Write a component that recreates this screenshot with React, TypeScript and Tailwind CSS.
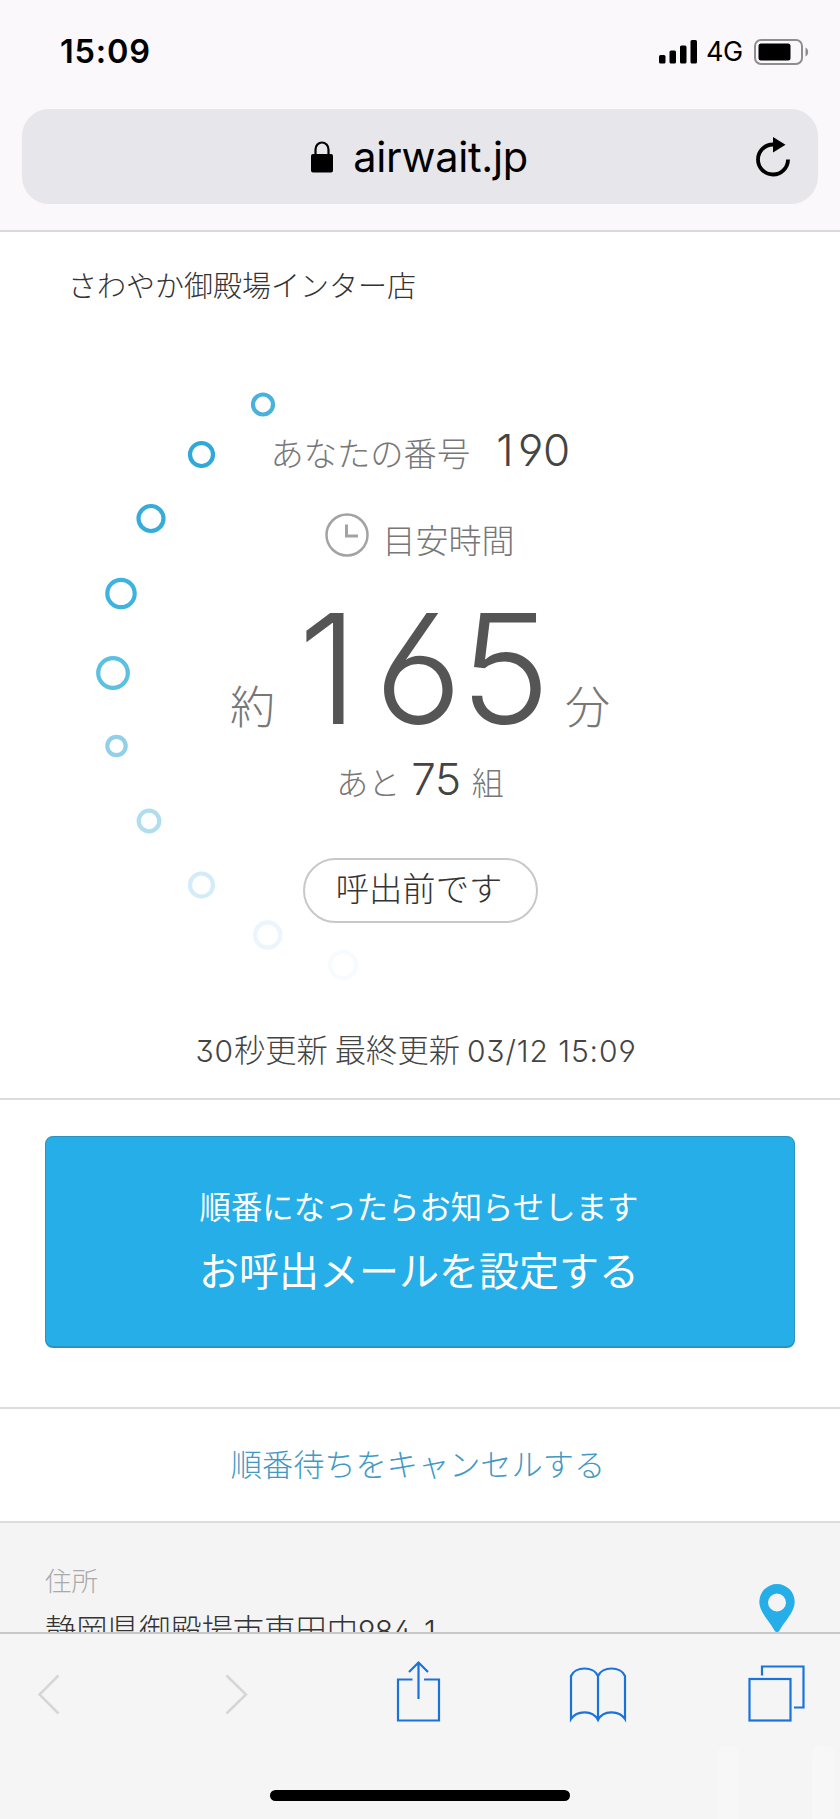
const JP = "font-['Noto_Sans_CJK_JP',sans-serif]";
const NUM =
  "font-['Inter','Noto_Sans_CJK_JP',sans-serif] font-light [font-feature-settings:'ss01','cv03','cv04']";

const RINGS = [
  { x: 263, y: 172.5, r: 10, color: "#48b2dc" },
  { x: 201.5, y: 222.5, r: 11.5, color: "#2fa8da" },
  { x: 151, y: 286.5, r: 12.5, color: "#36acdb" },
  { x: 121, y: 361.5, r: 13.7, color: "#3fb3df" },
  { x: 113, y: 441, r: 14.8, color: "#5cc0e2" },
  { x: 116.5, y: 514, r: 9.2, color: "#92d0ea" },
  { x: 149, y: 589, r: 10.3, color: "#b0def0" },
  { x: 201.5, y: 653, r: 11.5, color: "#d3ecf7" },
  { x: 267.7, y: 703, r: 12.6, color: "#eaf5fc" },
  { x: 343, y: 733, r: 13, color: "#f7fbfe" },
];

function StatusBar() {
  return (
    <div className="flex h-[109px] items-start justify-between pl-[60px] pr-[31px] pt-8">
      <span className="font-['Inter',sans-serif] text-[32.500px] font-semibold leading-10 tracking-[0.8px]">
        15:09
      </span>
      <div className="flex h-10 items-center">
        <svg width="39" height="24" viewBox="0 0 39 24">
          <rect x="0" y="15" width="6.5" height="8.5" rx="1.5" />
          <rect x="10.5" y="10.5" width="6.5" height="13" rx="1.5" />
          <rect x="21" y="5.5" width="6.5" height="18" rx="1.5" />
          <rect x="31.5" y="0" width="6.5" height="23.5" rx="1.5" />
        </svg>
        <span className="ml-2 w-[48px] font-['Inter',sans-serif] text-[27px] leading-[42px] tracking-[-0.4px]">
          4G
        </span>
        <svg width="55" height="26" viewBox="0 0 55 26">
          <rect
            x="1"
            y="1"
            width="47"
            height="24"
            rx="6"
            fill="none"
            stroke="#8e8e8e"
            strokeWidth="2"
          />
          <rect x="4.5" y="4.5" width="32" height="17" rx="2.5" />
          <path d="M51.5 8.5c3.5 1.5 3.5 7.500 0 9z" fill="#8e8e8e" />
        </svg>
      </div>
    </div>
  );
}

function AddressBar() {
  return (
    <div className="mx-[22px] grid h-[95px] grid-cols-[80px_1fr_80px] items-center rounded-[27px] bg-[#e7e6ea]">
      <span />
      <div className="flex items-center justify-center pr-0.5">
        <svg width="24" height="32" viewBox="0 0 24 32" className="mr-[19px]">
          <rect x="1" y="13" width="22" height="18.500" rx="2" />
          <path
            d="M5.500 14V8.500a6.500 7 0 0 1 13 0V14"
            fill="none"
            stroke="#000"
            strokeWidth="2.200"
          />
        </svg>
        <span className="pt-[3px] font-['Inter',sans-serif] text-[41.500px] leading-none tracking-[-0.3px]">
          airwait.jp
        </span>
      </div>
      <svg width="36" height="42" viewBox="0 0 36 42" className="ml-[17px]">
        <path
          d="M18 8.500A15 15 0 1 0 33 23.500"
          fill="none"
          stroke="#000"
          strokeWidth="3.800"
        />
        <path d="M18 1v15.500l12.500-7.700z" />
      </svg>
    </div>
  );
}

function WaitPanel() {
  return (
    <section className="relative h-[868px] border-b-2 border-[#dcdcdc]">
      {/* Progress rings around the counter */}
      <svg
        width="420"
        height="800"
        viewBox="0 0 420 800"
        fill="none"
        strokeWidth="4.200"
        className="absolute left-0 top-0"
      >
        {RINGS.map((ring) => (
          <circle key={ring.y} cx={ring.x} cy={ring.y} r={ring.r} stroke={ring.color} />
        ))}
      </svg>

      <h1
        className={`${JP} h-[170px] pl-[68px] pt-[31px] text-[29px] font-light leading-[42px] text-[#333]`}
      >
        さわやか御殿場インター店
      </h1>

      <div className="flex h-[96px] items-baseline justify-center leading-[96px]">
        <span className={`${JP} text-[33.300px] font-light text-[#777]`}>あなたの番号</span>
        <span className={`${NUM} ml-[26px] text-[44px] tracking-[-0.5px] text-[#444]`}>
          <span className="tracking-[4.500px]">1</span>90
        </span>
      </div>

      <div className="flex h-[79px] items-start justify-center pr-px pt-[15px]">
        <svg width="44" height="44" viewBox="0 0 44 44" fill="none" stroke="#a3a3a3">
          <circle cx="22" cy="22" r="20.500" strokeWidth="2.500" />
          <path d="M21.500 11.500V23H33" strokeWidth="3" />
        </svg>
        <span className={`${JP} ml-3.5 mt-0.5 text-[33px] font-light leading-[48px] text-[#777]`}>
          目安時間
        </span>
      </div>

      <div className="flex h-[184px] items-baseline justify-center leading-[184px]">
        <span className={`${JP} text-[45px] font-light text-[#777]`}>約</span>
        <span className={`${NUM} ml-[23px] mr-[17px] text-[153px] tracking-[-2.500px] text-[#555]`}>
          <span className="tracking-[16px]">1</span>65
        </span>
        <span className={`${JP} text-[45px] font-light text-[#777]`}>分</span>
      </div>

      <div className="flex h-[68px] items-baseline justify-center leading-9">
        <span className={`${JP} text-[32px] font-light text-[#777]`}>あと</span>
        <span className={`${NUM} mx-[11px] text-[44px] tracking-[-0.5px] text-[#444]`}>75</span>
        <span className={`${JP} text-[32px] font-light text-[#777]`}>組</span>
      </div>

      <div className="mt-[29px] flex justify-center">
        <span
          className={`${JP} h-[65px] w-[235px] rounded-full border-2 border-[#c8c8c8] pr-0.5 text-center text-[33.300px] font-light leading-[54px] text-[#333]`}
        >
          呼出前です
        </span>
      </div>

      <p
        className={`${JP} mt-[101px] pr-2 text-center text-[31.300px] font-light leading-[50px] text-[#444]`}
      >
        <span className={`${NUM} text-[30px] tracking-[0.9px]`}>30</span>秒更新 最終更新{" "}
        <span className={`${NUM} text-[30px] tracking-[0.9px]`}>03/12 15:09</span>
      </p>
    </section>
  );
}

function Toolbar() {
  return (
    <nav className="relative h-[187px] border-t-2 border-[#c8c8c8] bg-[#f5f5f5]">
      <svg width="840" height="100" viewBox="0 1634 840 100" fill="none" strokeWidth="2.200">
        <g stroke="#d6d6d6" strokeWidth="2.500">
          <path d="M58.500 1675.500L39.500 1694.500L58.500 1713.500" />
          <path d="M226.500 1675.500L246 1694.500L226.500 1713.500" />
        </g>
        <g stroke="#1a73dc">
          {/* Share */}
          <path d="M412.500 1679.500H398V1720.500H439V1679.500H424" />
          <path d="M418.500 1699V1663M409 1672L418.500 1662.500L428 1672" />
          {/* Bookmarks */}
          <path d="M598 1720V1676C594 1666 575 1666 571 1676V1719C577 1710 593 1710 598 1720C603 1710 619 1710 625 1719V1676C621 1666 602 1666 598 1676" />
          {/* Tabs */}
          <rect x="749.500" y="1679" width="41" height="41.500" />
          <path d="M762 1675.500V1666.500H803.500V1707.500H794" />
        </g>
      </svg>
      <div className="mx-auto mt-[56px] h-[11px] w-[300px] rounded-full bg-black" />
      {/* Page content showing faintly through the bar */}
      <div className="absolute bottom-0 right-[101px] h-[73px] w-[22px] rounded-t-lg bg-[#f7f7f7]" />
      <div className="absolute bottom-0 right-[5px] h-[73px] w-[23px] rounded-t-lg bg-[#f7f7f7]" />
    </nav>
  );
}

export default function App() {
  return (
    <div className="flex h-[1819px] w-[840px] flex-col overflow-hidden bg-white text-black">
      <header className="h-[232px] shrink-0 border-b-2 border-[#dadada] bg-[#faf8fa]">
        <StatusBar />
        <AddressBar />
      </header>

      <main className="h-[1400px] shrink-0 overflow-hidden">
        <WaitPanel />

        <section className="h-[309px] border-b-2 border-[#dcdcdc] px-[45px] pt-9">
          <button
            className={`${JP} flex h-[212px] w-full flex-col items-center rounded-lg border border-b-2 border-[#2b93bf] bg-[#25aee7] pr-0.5 pt-[46px] text-white`}
          >
            <span className="text-[31.400px] leading-[46px]">順番になったらお知らせします</span>
            <span className="mt-[10px] text-[40px] leading-[60px]">お呼出メールを設定する</span>
          </button>
        </section>

        <section
          className={`${JP} flex h-[114px] items-center justify-center border-b-2 border-[#dcdcdc] pb-1 pr-1 text-[31.200px] font-light text-[#4399c4]`}
        >
          順番待ちをキャンセルする
        </section>

        <section className="flex h-[200px] justify-between bg-[#f4f4f4] pl-[45px] pr-[45px]">
          <dl className={`${JP} font-light`}>
            <dt className="pt-[37px] text-[26.500px] leading-10 text-[#aaa]">住所</dt>
            <dd className="mt-1.5 text-[31.300px] leading-[46px] text-[#333]">
              静岡県御殿場市東田中
              <span className={`${NUM} text-[30px] tracking-[-0.5px]`}>984-1</span>
            </dd>
          </dl>
          <svg width="36" height="48" viewBox="0 0 36 48" className="mt-[61px]">
            <path
              fill="#25aee7"
              fillRule="evenodd"
              d="M18 0A17.700 17.700 0 0 0 .3 18C.3 28 11 38 15.500 46.500Q18 50 20.500 46.500C25 38 35.700 28 35.700 18A17.700 17.700 0 0 0 18 0ZM18 9.500A9 9 0 1 1 18 27.500A9 9 0 1 1 18 9.500Z"
            />
          </svg>
        </section>
      </main>

      <Toolbar />
    </div>
  );
}
